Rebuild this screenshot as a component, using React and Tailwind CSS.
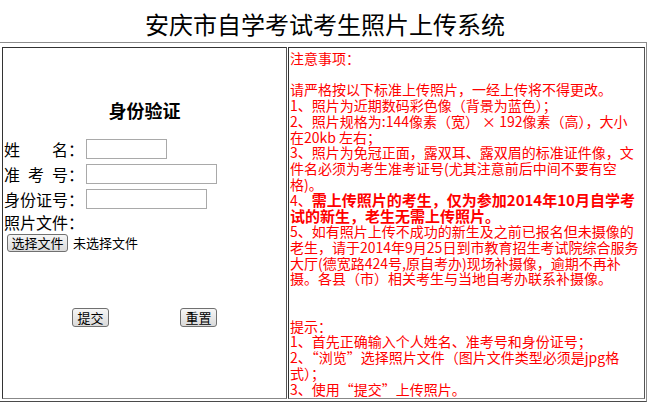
import React from 'react';

const cjk = { fontFamily: '"Noto Sans CJK SC", "Noto Sans", sans-serif' };

const Label = ({ chars }) => (
  <span className="flex items-center">
    <span className="flex justify-between w-[64px]">
      {chars.map((c, i) => (
        <span key={i}>{c}</span>
      ))}
    </span>
    <span className="w-[18px]">：</span>
  </span>
);

const OldButton = ({ children, className = '' }) => (
  <span
    className={`inline-flex items-center justify-center border border-[#707070] rounded-[3px] bg-gradient-to-b from-[#f6f6f6] to-[#dadada] text-[13px] leading-none text-black ${className}`}
  >
    {children}
  </span>
);

// notice lines, one per row as in the original page
const notes = [
  '注意事项：',
  '',
  '请严格按以下标准上传照片，一经上传将不得更改。',
  '1、照片为近期数码彩色像（背景为蓝色）；',
  '2、照片规格为:144像素（宽） × 192像素（高），大小',
  '在20kb 左右；',
  '3、照片为免冠正面，露双耳、露双眉的标准证件像，文',
  '件名必须为考生准考证号(尤其注意前后中间不要有空',
  '格)。',
  ['4、', '需上传照片的考生，仅为参加2014年10月自学考'],
  ['', '试的新生，老生无需上传照片。'],
  '5、如有照片上传不成功的新生及之前已报名但未摄像的',
  '老生，请于2014年9月25日到市教育招生考试院综合服务',
  '大厅(德宽路424号,原自考办)现场补摄像，逾期不再补',
  '摄。各县（市）相关考生与当地自考办联系补摄像。',
  '',
  '',
  '提示：',
  '1、首先正确输入个人姓名、准考号和身份证号；',
  '2、“浏览”选择照片文件（图片文件类型必须是jpg格',
  '式）；',
  '3、使用“提交”上传照片。',
];

const App = () => {
  return (
    <div className="w-[650px] h-[405px] bg-white overflow-hidden text-black" style={cjk}>
      {/* Title */}
      <div className="h-[42px] pt-[8px] text-center text-[24px] leading-[32px]">
        安庆市自学考试考生照片上传系统
      </div>

      {/* Outer table */}
      <div className="w-[647px] flex gap-[1px] border-t border-r border-t-[#8c8c8c] border-r-[#8c8c8c] border-b border-b-[#4a4a4a] pl-[2px] pt-[4px] pb-[2px] pr-[1px]">
        {/* Left cell */}
        <div className="w-[285px] h-[352px] border border-t-[#333] border-l-[#333] border-r-[#555] border-b-[#888] flex flex-col">
          <div className="mt-[50px] text-center text-[18px] font-bold leading-[24px]">身份验证</div>

          <div className="mt-[14.5px] h-[25px] flex items-center pl-[1px] text-[16px]">
            <Label chars={['姓', '名']} />
            <span className="w-[81px] h-[20px] border border-[#a9a9a9] bg-white" />
          </div>
          <div className="h-[25px] flex items-center pl-[1px] text-[16px]">
            <Label chars={['准', '考', '号']} />
            <span className="w-[131px] h-[20px] border border-[#a9a9a9] bg-white" />
          </div>
          <div className="h-[25px] flex items-center pl-[1px] text-[16px]">
            <Label chars={['身', '份', '证', '号']} />
            <span className="w-[121px] h-[20px] border border-[#a9a9a9] bg-white" />
          </div>
          <div className="h-[21px] flex items-center pl-[1px] text-[16px]">
            <Label chars={['照', '片', '文', '件']} />
          </div>
          <div className="h-[20px] flex items-center">
            <OldButton className="ml-[4px] w-[61px] h-[18px]">选择文件</OldButton>
            <span className="ml-[5px] text-[13px]">未选择文件</span>
          </div>

          <div className="mt-[55px] h-[20px] flex items-center">
            <OldButton className="ml-[69px] w-[37px] h-[19px]">提交</OldButton>
            <OldButton className="ml-[71px] w-[37px] h-[19px]">重置</OldButton>
          </div>
        </div>

        {/* Right cell */}
        <div className="w-[357px] h-[352px] border border-t-[#333] border-l-[#333] border-r-[#555] border-b-[#888] overflow-hidden">
          <div className="pt-[2px] pl-[1px] text-[14px] text-[#ff0000] whitespace-nowrap">
            {notes.map((line, i) => (
              <div key={i} className="h-[15.75px] flex items-center leading-none">
                {Array.isArray(line) ? (
                  <>
                    {line[0]}
                    <b className="text-[15px]">{line[1]}</b>
                  </>
                ) : (
                  line
                )}
              </div>
            ))}
          </div>
        </div>
      </div>
    </div>
  );
};

export default App;
